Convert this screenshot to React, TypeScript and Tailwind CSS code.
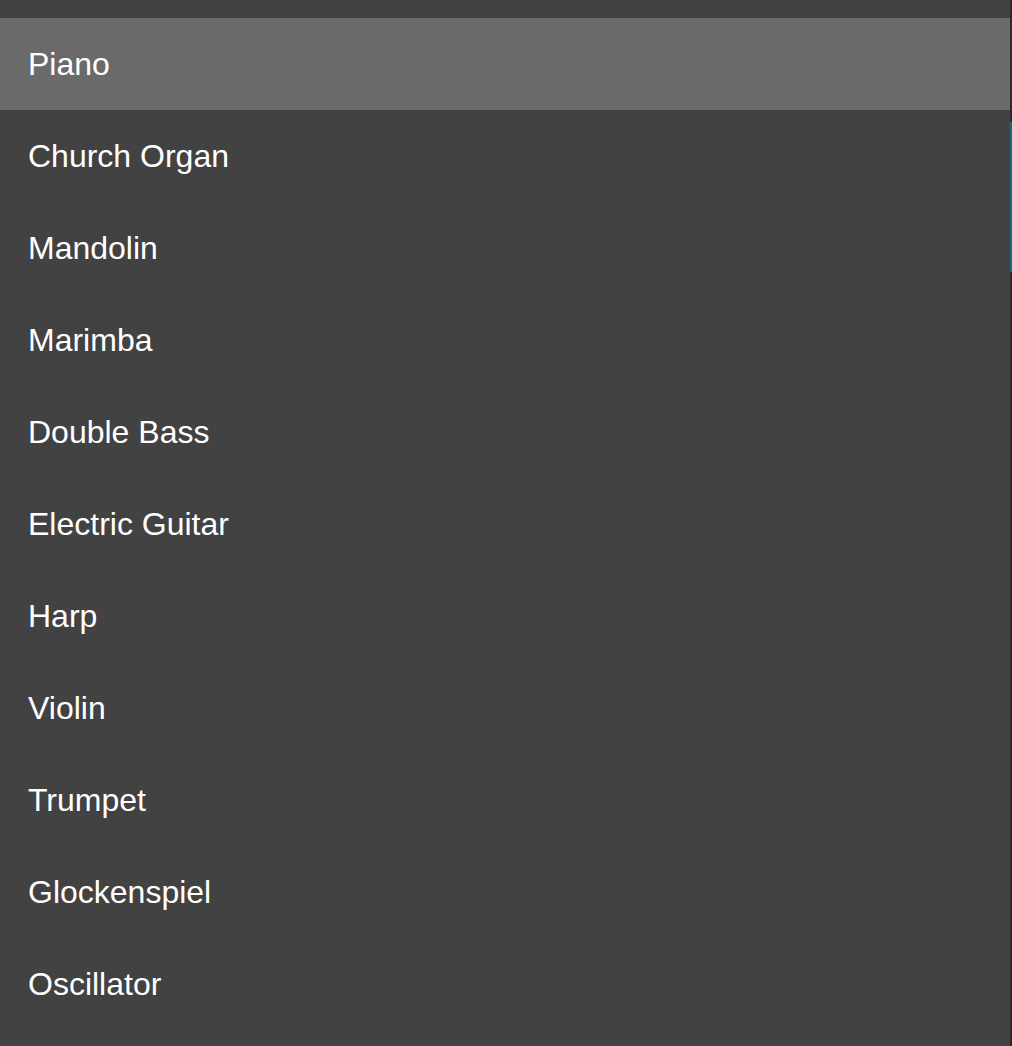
import React from 'react';

const instruments = [
  'Piano',
  'Church Organ',
  'Mandolin',
  'Marimba',
  'Double Bass',
  'Electric Guitar',
  'Harp',
  'Violin',
  'Trumpet',
  'Glockenspiel',
  'Oscillator',
];

const App: React.FC = () => {
  const selected = 0;

  return (
    <div className="flex h-[1046px] w-[1012px] overflow-hidden bg-[#424242] font-['Liberation_Sans',Arial,sans-serif]">
      {/* List */}
      <div className="flex flex-1 flex-col">
        <div className="h-[18px] shrink-0 bg-[#424242]" />
        {instruments.map((name, i) => (
          <div
            key={name}
            className={`flex h-[92px] shrink-0 items-center pl-[28px] text-[32px] leading-none text-white ${
              i === selected ? 'bg-[#6a6a6a]' : 'bg-[#424242]'
            }`}
          >
            {name}
          </div>
        ))}
      </div>

      {/* Scrollbar */}
      <div className="flex w-[2px] shrink-0 flex-col bg-[#2c2c2c]">
        <div className="mt-[122px] h-[150px] bg-[#16697a]" />
      </div>
    </div>
  );
};

export default App;
